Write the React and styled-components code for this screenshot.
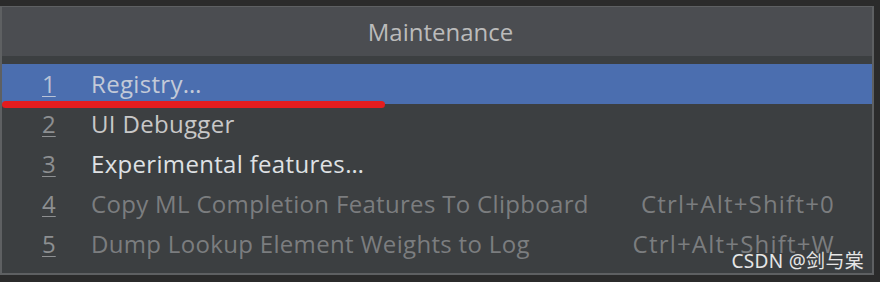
import React from 'react'
import styled, { createGlobalStyle } from 'styled-components'

const Global = createGlobalStyle`
  html, body {
    margin: 0;
    padding: 0;
    background: #2b2b2b;
  }
  body {
    font-family: "Open Sans", "Noto Sans", sans-serif;
  }
`

const items = [
  { key: '1', label: 'Registry…', selected: true },
  { key: '2', label: 'UI Debugger', tone: 'normal' },
  { key: '3', label: 'Experimental features…', tone: 'bright' },
  { key: '4', label: 'Copy ML Completion Features To Clipboard', tone: 'disabled', shortcut: 'Ctrl+Alt+Shift+0' },
  { key: '5', label: 'Dump Lookup Element Weights to Log', tone: 'disabled', shortcut: 'Ctrl+Alt+Shift+W' },
]

const App = () => (
  <Page>
    <Global />
    <Panel>
      <Header>Maintenance</Header>
      <List>
        {items.map(it => (
          <Row key={it.key} selected={it.selected}>
            <Num tone={it.tone} selected={it.selected}>{it.key}</Num>
            <Label tone={it.tone} selected={it.selected}>{it.label}</Label>
            {it.shortcut && <Shortcut>{it.shortcut}</Shortcut>}
          </Row>
        ))}
      </List>
      <Underline />
      <Watermark>CSDN @剑与棠</Watermark>
    </Panel>
  </Page>
)

const Page = styled.div`
  width: 880px;
  height: 282px;
  padding-top: 6px;
  box-sizing: border-box;
`
const Panel = styled.div`
  position: relative;
  width: 874px;
  height: 269px;
  box-sizing: border-box;
  border: 2px solid #5e6062;
  border-top-width: 1px;
  background: #3c3f41;
`
const Header = styled.div`
  height: 49px;
  background: #4b4d51;
  color: #bbbbbb;
  font-size: 24px;
  display: flex;
  align-items: center;
  justify-content: center;
  padding-left: 7px;
`
const List = styled.div`
  display: flex;
  flex-direction: column;
  padding-top: 8px;
`
const toneColor = {
  normal: '#c8c8c8',
  bright: '#dfe1e4',
  disabled: '#7b7d7f',
}
const Row = styled.div`
  height: 40px;
  display: flex;
  align-items: center;
  padding: 0 37px 0 40px;
  background: ${p => (p.selected ? '#4b6eaf' : 'transparent')};
  font-size: 24px;
  line-height: 38px;
`
const Num = styled.span`
  width: 49px;
  color: ${p => (p.selected ? '#b9c3d6' : '#8d8f91')};
  text-decoration: underline;
  text-underline-offset: 3px;
  text-decoration-thickness: 1px;
`
const Label = styled.span`
  flex: 1;
  color: ${p => (p.selected ? '#c3cad8' : toneColor[p.tone])};
  white-space: nowrap;
  letter-spacing: 0.32px;
`
const Shortcut = styled.span`
  color: #7b7d7f;
  white-space: nowrap;
  letter-spacing: 1.2px;
`
const Underline = styled.div`
  position: absolute;
  left: 0;
  top: 94px;
  width: 383px;
  height: 7px;
  border-radius: 4px;
  background: #e31d1f;
`
const Watermark = styled.div`
  position: absolute;
  right: 8px;
  bottom: 0px;
  color: #e6e6e6;
  font-size: 19px;
  line-height: 24px;
  letter-spacing: 0.3px;
  font-family: "Noto Sans", "Noto Sans CJK SC", sans-serif;
`

export default App
